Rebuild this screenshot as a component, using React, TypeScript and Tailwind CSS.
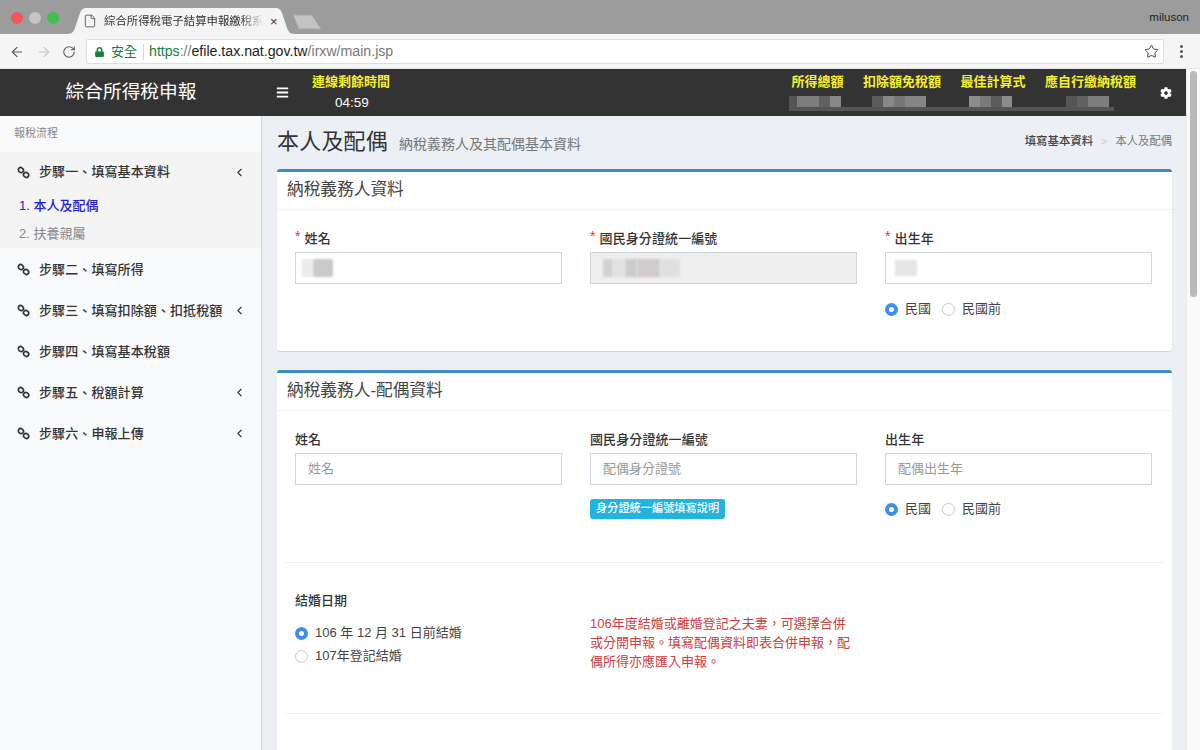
import { ArrowLeft, ArrowRight, RotateCw, Star, File, ChevronLeft } from 'lucide-react';
import { FaBars, FaCog, FaLock } from 'react-icons/fa';

const CJK = 'font-["Liberation_Sans","Noto_Sans_CJK_TC",sans-serif]';

const summaryCols = ['所得總額', '扣除額免稅額', '最佳計算式', '應自行繳納稅額'];

// pixelated figures under the summary labels: [left margin, width, colour]
const maskedFigures: [number, number, string][] = [
  [0, 8, 'bg-[#555]'],
  [0, 22, 'bg-[#7d7d7d]'],
  [0, 11, 'bg-[#616161]'],
  [0, 11, 'bg-[#888]'],
  [31, 11, 'bg-[#5c5c5c]'],
  [0, 11, 'bg-[#888]'],
  [0, 11, 'bg-[#777]'],
  [0, 21, 'bg-[#858585]'],
  [43, 11, 'bg-[#8c8c8c]'],
  [0, 11, 'bg-[#7a7a7a]'],
  [0, 11, 'bg-[#5c5c5c]'],
  [0, 10, 'bg-[#8c8c8c]'],
  [54, 11, 'bg-[#555]'],
  [0, 11, 'bg-[#616161]'],
  [0, 21, 'bg-[#7d7d7d]'],
];

function ChainIcon() {
  return (
    <svg width="13" height="13" viewBox="0 0 14 14" className="shrink-0" fill="none" stroke="#333" strokeWidth="1.8">
      <ellipse cx="4.2" cy="4.4" rx="2.9" ry="2.5" transform="rotate(40 4.2 4.4)" />
      <ellipse cx="9.8" cy="9.6" rx="2.9" ry="2.5" transform="rotate(40 9.8 9.6)" />
    </svg>
  );
}

function SideItem({ label, arrow }: { label: string; arrow?: boolean }) {
  return (
    <div className="h-[41px] flex items-center pl-[17px] pr-[15px] text-[13px] font-medium text-[#333]">
      <ChainIcon />
      <span className="ml-[9px] flex-1 tracking-[0.1px]">{label}</span>
      {arrow && <ChevronLeft className="text-[#333] w-[13px] h-[13px]" strokeWidth={2} />}
    </div>
  );
}

function Radio({ on, label }: { on?: boolean; label: string }) {
  return (
    <span className="inline-flex items-center">
      {on ? (
        <span className="w-[13px] h-[13px] rounded-full bg-[#3f8fe6] flex items-center justify-center">
          <span className="w-[5px] h-[5px] rounded-full bg-white" />
        </span>
      ) : (
        <span className="w-[13px] h-[13px] rounded-full border border-[#c8c8c8] bg-white" />
      )}
      <span className="ml-[7px] text-[13px] text-[#444]">{label}</span>
    </span>
  );
}

function Field({ label, required, children }: { label: string; required?: boolean; children: React.ReactNode }) {
  return (
    <div className="w-[267px]">
      <div className="h-[24px] pt-[1px] flex items-start text-[13px] font-medium text-[#333] leading-[20px] tracking-[0.1px]">
        {required && <span className="text-[#e3342f] mr-[4px] leading-[14px] text-[14px]">*</span>}
        {label}
      </div>
      {children}
    </div>
  );
}

function TextBox({ placeholder, children, gray }: { placeholder?: string; children?: React.ReactNode; gray?: boolean }) {
  return (
    <div className={`h-[32px] border border-[#ccd6dc] flex items-center px-[12px] text-[13px] text-[#999] ${gray ? 'bg-[#eeeeee]' : 'bg-white'}`}>
      {placeholder}
      {children}
    </div>
  );
}

function CardHeader({ title }: { title: string }) {
  return (
    <div className="h-[38px] pl-[10px] pb-[2px] flex items-center border-b border-[#f2f2f2] text-[16.7px] text-[#444]">{title}</div>
  );
}

export default function App() {
  return (
    <div className={`w-[1200px] h-[750px] overflow-hidden flex flex-col bg-white ${CJK}`}>
      {/* browser tab strip */}
      <div className="h-[34px] bg-[#9c9c9c] flex items-end relative shrink-0">
        <div className="flex items-center gap-[6px] ml-[11px] mb-[10px]">
          <span className="w-[12px] h-[12px] rounded-full bg-[#f0575a]" />
          <span className="w-[12px] h-[12px] rounded-full bg-[#c4c4c4]" />
          <span className="w-[12px] h-[12px] rounded-full bg-[#3fc04d]" />
        </div>
        <div className="relative w-[228px] h-[26px] ml-[8px] flex items-center pl-[16px]">
          <svg className="absolute inset-0" width="228" height="26" viewBox="0 0 228 26">
            <path d="M0 26 C6 26 7 23 9 17 L13 5 C14 2 16 0 20 0 L208 0 C212 0 214 2 215 5 L219 17 C221 23 222 26 228 26 Z" fill="#f4f4f4" />
          </svg>
          <File className="relative w-[14px] h-[14px] text-[#555] mr-[7px] shrink-0" strokeWidth={1.5} />
          <span className="relative w-[160px] overflow-hidden whitespace-nowrap text-[11.4px] text-[#333] leading-[14px] mask-r-from-[85%] mask-r-to-100%">綜合所得稅電子結算申報繳稅系統</span>
          <span className="relative ml-[6px] text-[#333] text-[13px] leading-none">×</span>
        </div>
        <svg className="ml-[-4px] mb-[4px]" width="32" height="16" viewBox="0 0 32 16">
          <path d="M2 1 L21 1 L30 15 L8 15 Z" fill="#c3c3c3" stroke="#a9a9a9" />
        </svg>
        <span className="absolute right-[11px] top-[12px] text-[11.5px] text-[#222] leading-none">miluson</span>
      </div>

      {/* browser toolbar */}
      <div className="h-[35px] bg-[#f5f5f5] flex items-center shrink-0 border-b border-[#e8e8e8] pt-[1px]">
        <ArrowLeft className="ml-[9px] w-[16px] h-[16px] text-[#5a5a5a]" strokeWidth={1.7} />
        <ArrowRight className="ml-[11px] w-[16px] h-[16px] text-[#c6c6c6]" strokeWidth={1.7} />
        <RotateCw className="ml-[10px] w-[14px] h-[14px] text-[#5a5a5a]" strokeWidth={1.8} />
        <div className="ml-[10px] w-[1078px] h-[25px] bg-white border border-[#dedede] rounded-[2px] flex items-center pl-[8px] pr-[4px] text-[14.15px]">
          <FaLock className="w-[9px] h-[10px] text-[#188038]" />
          <span className="ml-[7px] text-[13px] text-[#188038]">安全</span>
          <span className="ml-[6px] mr-[5px] w-px h-[16px] bg-[#d5d5d5]" />
          <span className="text-[#188038]">https</span>
          <span className="text-[#777]">://</span>
          <span className="text-[#222]">efile.tax.nat.gov.tw</span>
          <span className="text-[#777]">/irxw/main.jsp</span>
          <Star className="ml-auto w-[15px] h-[15px] text-[#444]" strokeWidth={1.6} />
        </div>
        <span className="ml-[16px] flex flex-col gap-[2px]">
          <span className="w-[3px] h-[3px] rounded-full bg-[#555]" />
          <span className="w-[3px] h-[3px] rounded-full bg-[#555]" />
          <span className="w-[3px] h-[3px] rounded-full bg-[#555]" />
        </span>
      </div>

      <div className="flex-1 flex min-h-0">
        <div className="w-[1186px] flex flex-col min-h-0">
          {/* app header */}
          <div className="h-[47px] bg-[#333333] flex items-center shrink-0 text-white">
            <div className="w-[262px] text-center text-[18.7px]">綜合所得稅申報</div>
            <FaBars className="ml-[14px] w-[13px] h-[13px]" />
            <div className="ml-[23px] w-[100px] h-full pt-[5px] flex flex-col">
              <span className="text-[13px] font-bold text-[#f5f02e] leading-[16px] whitespace-nowrap">連線剩餘時間</span>
              <span className="text-[13.5px] ml-[23px] mt-[6px] leading-[14px]">04:59</span>
            </div>
            <div className="ml-auto h-full pt-[5px] flex flex-col">
              <div className="flex gap-[19.5px]">
                {summaryCols.map((label) => (
                  <span key={label} className="text-[13px] font-bold text-[#f5f02e] leading-[16px] whitespace-nowrap">{label}</span>
                ))}
              </div>
              <div className="mt-[6px] ml-[-2px] w-[325px] flex h-[15px] border-b-[4px] border-[#555] blur-[0.5px]">
                {maskedFigures.map(([ml, w, color], i) => (
                  <span key={i} className={color} style={{ marginLeft: ml, width: w }} />
                ))}
              </div>
            </div>
            <FaCog className="ml-[24px] mr-[14px] w-[12px] h-[12px]" />
          </div>

          <div className="flex-1 flex min-h-0">
            {/* sidebar */}
            <div className="w-[262px] bg-[#f9fafc] border-r border-[#d2d6de] shrink-0">
              <div className="h-[36px] pl-[14px] pt-[10px] text-[11px] leading-[14px] text-[#888]">報稅流程</div>
              <div className="bg-[#f4f4f5] h-[96px]">
                <div className="h-[40px] flex flex-col justify-center">
                  <SideItem label="步驟一、填寫基本資料" arrow />
                </div>
                <div className="pl-[19px] text-[13px] font-medium text-[#2222cc] h-[28px] flex items-center">1. 本人及配偶</div>
                <div className="pl-[19px] text-[13px] text-[#888] h-[28px] flex items-center">2. 扶養親屬</div>
              </div>
              <div className="pt-[1px]">
                <SideItem label="步驟二、填寫所得" />
                <SideItem label="步驟三、填寫扣除額、扣抵稅額" arrow />
                <SideItem label="步驟四、填寫基本稅額" />
                <SideItem label="步驟五、稅額計算" arrow />
                <SideItem label="步驟六、申報上傳" arrow />
              </div>
            </div>

            {/* content */}
            <div className="flex-1 bg-[#ecf0f5] pl-[15px] pr-[14px] overflow-hidden">
              <div className="h-[53px] flex items-center pb-[2px]">
                <span className="text-[22px] text-[#333] tracking-[0.2px]">本人及配偶</span>
                <span className="ml-[11px] mt-[5px] text-[14px] text-[#777]">納稅義務人及其配偶基本資料</span>
                <span className="ml-auto text-[11.4px] font-medium text-[#444]">填寫基本資料</span>
                <span className="mx-[8px] text-[11px] text-[#ccc]">&gt;</span>
                <span className="text-[11.3px] text-[#777]">本人及配偶</span>
              </div>

              <div className="h-[182px] bg-white border-t-[3px] border-[#3c8dbc] rounded-[3px] shadow-[0_1px_1px_rgba(0,0,0,0.12)]">
                <CardHeader title="納稅義務人資料" />
                <div className="flex pl-[18px] pt-[18px] gap-[28px]">
                  <Field label="姓名" required>
                    <TextBox>
                      <span className="ml-[-6px] w-[11px] h-[18px] bg-[#ececec] blur-[1px]" />
                      <span className="w-[20px] h-[18px] bg-[#c9c9c9] blur-[1px]" />
                    </TextBox>
                  </Field>
                  <Field label="國民身分證統一編號" required>
                    <TextBox gray>
                      <span className="w-[10px] h-[18px] bg-[#d2d2d2] blur-[1px]" />
                      <span className="w-[12px] h-[18px] bg-[#e2e2e2] blur-[1px]" />
                      <span className="w-[12px] h-[18px] bg-[#cdcdcd] blur-[1px]" />
                      <span className="w-[23px] h-[18px] bg-[#d3cccc] blur-[1px]" />
                      <span className="w-[20px] h-[18px] bg-[#e0e0e0] blur-[1px]" />
                    </TextBox>
                  </Field>
                  <Field label="出生年" required>
                    <TextBox>
                      <span className="ml-[-3px] w-[22px] h-[16px] bg-[#e6e6e6] blur-[1px]" />
                    </TextBox>
                    <div className="mt-[16px] flex items-center gap-[11px] leading-[18px]">
                      <Radio on label="民國" />
                      <Radio label="民國前" />
                    </div>
                  </Field>
                </div>
              </div>

              <div className="mt-[19px] h-[400px] bg-white border-t-[3px] border-[#3c8dbc] rounded-[3px]">
                <CardHeader title="納稅義務人-配偶資料" />
                <div className="flex pl-[18px] pt-[18px] gap-[28px] h-[151px]">
                  <Field label="姓名">
                    <TextBox placeholder="姓名" />
                  </Field>
                  <Field label="國民身分證統一編號">
                    <TextBox placeholder="配偶身分證號" />
                    <button className="mt-[14px] h-[20px] px-[6px] rounded-[3px] bg-[#1fb5e0] text-white text-[11.2px] font-medium leading-none">身分證統一編號填寫說明</button>
                  </Field>
                  <Field label="出生年">
                    <TextBox placeholder="配偶出生年" />
                    <div className="mt-[15px] flex items-center gap-[11px] leading-[18px]">
                      <Radio on label="民國" />
                      <Radio label="民國前" />
                    </div>
                  </Field>
                </div>
                <div className="mx-[9px] border-t border-[#eeeeee]" />
                <div className="flex h-[150px] pl-[18px] gap-[28px]">
                  <div className="w-[267px] pt-[28px]">
                    <div className="text-[13px] font-medium text-[#333] leading-[20px]">結婚日期</div>
                    <div className="mt-[13px] flex flex-col gap-[5px] leading-[18px]">
                      <Radio on label="106 年 12 月 31 日前結婚" />
                      <Radio label="107年登記結婚" />
                    </div>
                  </div>
                  <div className="w-[267px] pt-[51px] text-[13px] leading-[19px] text-[#cc4040]">
                    {'106年度結婚或離婚登記之夫妻\uFF0C可選擇合併或分開申報。填寫配偶資料即表合併申報\uFF0C配偶所得亦應匯入申報。'}
                  </div>
                </div>
                <div className="mx-[9px] border-t border-[#eeeeee]" />
              </div>
            </div>
          </div>
        </div>

        {/* scrollbar */}
        <div className="w-[14px] bg-[#fafafa] border-l border-[#ececec] pt-[2px] flex justify-center shrink-0">
          <span className="w-[7px] h-[226px] rounded-full bg-[#b9b9b9]" />
        </div>
      </div>
    </div>
  );
}
